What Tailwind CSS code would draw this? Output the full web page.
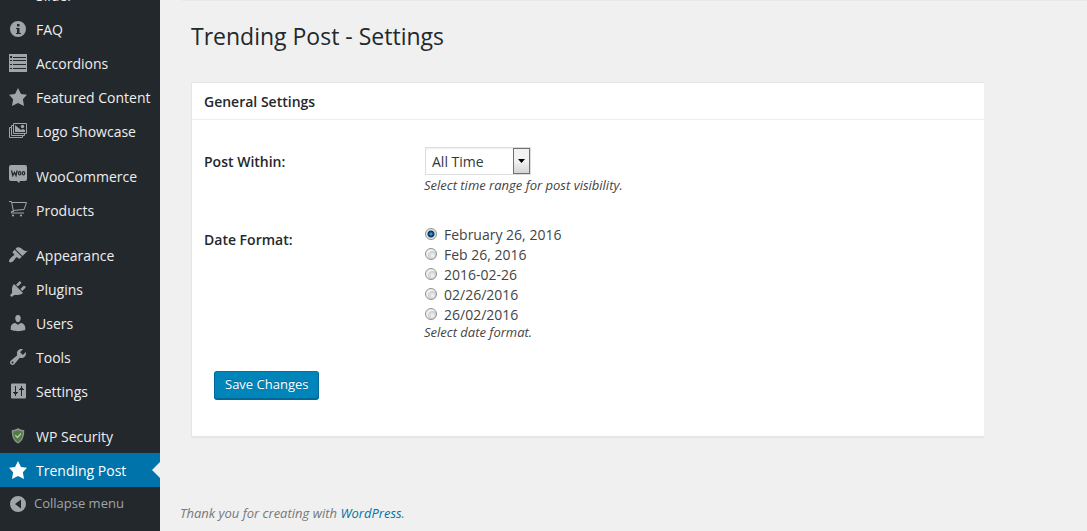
<!DOCTYPE html>
<html lang="en">
<head>
<meta charset="utf-8">
<meta name="viewport" content="width=device-width, initial-scale=1">
<title>Trending Post - Settings</title>
<script src="https://cdn.jsdelivr.net/npm/@tailwindcss/browser@4"></script>
</head>
<body class="flex h-screen overflow-hidden bg-[#f0f0f0] font-['Open_Sans',sans-serif] text-[14px] text-[#444]">

<nav aria-label="Admin menu" class="w-40 shrink-0 overflow-hidden bg-[#23282d] text-[#eee]">
  <ul class="-mt-[22px]">
    <li><a href="#" class="flex h-[34px] items-center gap-2 pl-2 whitespace-nowrap"><span class="size-5"></span>Slider</a></li>
    <li><a href="#" class="flex h-[34px] items-center gap-2 pl-2 whitespace-nowrap">
      <svg class="size-5 shrink-0 text-[#a0a5aa]" viewBox="0 0 20 20" fill="currentColor" fill-rule="evenodd"><path d="M10 2a8 8 0 1 0 0 16 8 8 0 0 0 0-16zM9 5h2.500v2.500H9zM8 9h3.500v5H13v1H8v-1h1v-4H8z"/></svg>FAQ</a></li>
    <li><a href="#" class="flex h-[34px] items-center gap-2 pl-2 whitespace-nowrap">
      <svg class="size-5 shrink-0 text-[#a0a5aa]" viewBox="0 0 20 20" fill="currentColor" fill-rule="evenodd"><path d="M1 1h18v18H1zM2 3v2h2V3zM5 4v1h13V4zM2 7v1h2V7zM5 7v1h13V7zM2 11v1h2v-1zM5 11v1h13v-1zM2 15v1h2v-1zM5 15v1h13v-1z"/></svg>Accordions</a></li>
    <li><a href="#" class="flex h-[34px] items-center gap-2 pl-2 whitespace-nowrap">
      <svg class="size-5 shrink-0 text-[#a0a5aa]" viewBox="0 0 20 20" fill="currentColor"><path d="M10 1l3 6 6 .75-4.120 4.620L16 19l-6-3-6 3 1.130-6.630L1 7.750 7 7z"/></svg>Featured Content</a></li>
    <li><a href="#" class="flex h-[34px] items-center gap-2 pl-2 whitespace-nowrap">
      <svg class="size-5 shrink-0 text-[#a0a5aa]" viewBox="0 0 20 20" fill="none" stroke="currentColor"><path d="M5.500 2.500h13v10h-13zM5 4.500H3.500v10h13V13M3 6.500H1.500v10h13V15"/><path fill="currentColor" stroke="none" d="M7 4l6 5 2-1 2 1v2H7z"/><circle cx="14.500" cy="5.500" r="1.700" fill="currentColor" stroke="none"/></svg>Logo Showcase</a></li>
    <li class="mt-[11px]"><a href="#" class="flex h-[34px] items-center gap-2 pl-2 whitespace-nowrap">
      <svg class="size-5 shrink-0 overflow-visible text-[#a0a5aa]" viewBox="0 0 20 20" fill="currentColor"><path d="M3 -1h14a2 2 0 0 1 2 2v12a2 2 0 0 1-2 2h-5l-1 2-2-2H3a2 2 0 0 1-2-2V1a2 2 0 0 1 2-2z"/><path d="M3.500 4.500l1.300 5 1.700-3 1.500 3 1.200-5" fill="none" stroke="#23282d" stroke-width="1.300"/><ellipse cx="11.700" cy="7.300" rx="1.200" ry="1.700" fill="none" stroke="#23282d" stroke-width="1.200"/><ellipse cx="15.500" cy="7.300" rx="1.200" ry="1.700" fill="none" stroke="#23282d" stroke-width="1.200"/></svg>WooCommerce</a></li>
    <li><a href="#" class="flex h-[34px] items-center gap-2 pl-2 whitespace-nowrap">
      <svg class="size-5 shrink-0 text-[#a0a5aa]" viewBox="0 0 20 20" fill="none" stroke="currentColor"><path d="M1 1.500h2.500L5.500 12M4 2.500h14.500L16 9.500 5 10.500M5 11.500H3.500v1.500H16"/><circle cx="5" cy="15.500" r="1.100" fill="currentColor" stroke="none"/><circle cx="13" cy="15.500" r="1.100" fill="currentColor" stroke="none"/></svg>Products</a></li>
    <li class="mt-[11px]"><a href="#" class="flex h-[34px] items-center gap-2 pl-2 whitespace-nowrap">
      <svg class="size-5 shrink-0 text-[#a0a5aa]" viewBox="0 0 20 20" fill="currentColor"><path d="M14.480 11.060L7.410 3.990l1.500-1.500c.5-.56 2.300-.47 3.510.32 1.210.8 1.430 1.280 2.910 2.100 1.180.64 2.450 1.260 4.450.85zm-.71.710L6.700 4.700 4.930 6.470c-.39.390-.39 1.020 0 1.410l1.060 1.060c.39.390.39 1.030 0 1.420-.6.600-1.430 1.110-2.210 1.690-.35.260-.7.530-1.010.840C1.430 14.230.4 16.080 1.400 17.070c.99 1 2.840-.03 4.180-1.360.31-.31.580-.66.850-1.020.57-.78 1.080-1.610 1.690-2.210.39-.39 1.020-.39 1.410 0l1.060 1.060c.39.390 1.020.39 1.410 0z"/></svg>Appearance</a></li>
    <li><a href="#" class="flex h-[34px] items-center gap-2 pl-2 whitespace-nowrap">
      <svg class="size-5 shrink-0 text-[#a0a5aa]" viewBox="0 0 20 20" fill="currentColor"><path d="M13.110 4.360L9.870 7.600 8 5.730l3.240-3.240c.35-.34 1.050-.2 1.560.32.520.51.660 1.210.310 1.550zm-8 1.770l.91-1.120 9.010 9.010-1.190.84c-.71.710-2.630 1.160-3.820 1.160H6.140L4.900 17.260c-.59.590-1.540.590-2.120 0-.59-.58-.59-1.530 0-2.120l1.240-1.240v-3.880c0-1.130.4-3.190 1.090-3.890zm7.260 3.970l3.240-3.240c.34-.35 1.040-.21 1.550.310.520.510.660 1.210.310 1.550l-3.240 3.250z"/></svg>Plugins</a></li>
    <li><a href="#" class="flex h-[34px] items-center gap-2 pl-2 whitespace-nowrap">
      <svg class="size-5 shrink-0 text-[#a0a5aa]" viewBox="0 0 20 20" fill="currentColor"><path d="M10 9.250c-2.270 0-2.730-3.440-2.730-3.440C7 4.020 7.820 2 9.970 2c2.160 0 2.980 2.020 2.710 3.810 0 0-.41 3.440-2.680 3.440zm0 2.570L12.720 10c2.390 0 4.520 2.330 4.520 4.530v2.490s-3.650 1.130-7.240 1.130c-3.650 0-7.240-1.130-7.240-1.130v-2.490c0-2.250 1.940-4.480 4.470-4.480z"/></svg>Users</a></li>
    <li><a href="#" class="flex h-[34px] items-center gap-2 pl-2 whitespace-nowrap">
      <svg class="size-5 shrink-0 text-[#a0a5aa]" viewBox="0 0 20 20" fill="currentColor"><path d="M16.680 9.770c-1.340 1.340-3.300 1.670-4.950.990l-5.410 6.520c-.99.990-2.590.99-3.580 0s-.99-2.590 0-3.570l6.520-5.420c-.68-1.650-.35-3.610.99-4.950 1.280-1.280 3.120-1.620 4.720-1.060l-2.890 2.890 2.820 2.820 2.860-2.870c.53 1.580.18 3.390-1.080 4.650zM3.810 16.210c.4.390 1.040.39 1.430 0 .4-.4.400-1.040 0-1.430-.39-.4-1.030-.4-1.430 0-.39.390-.39 1.030 0 1.430z"/></svg>Tools</a></li>
    <li><a href="#" class="flex h-[34px] items-center gap-2 pl-2 whitespace-nowrap">
      <svg class="size-5 shrink-0 text-[#a0a5aa]" viewBox="0 0 20 20" fill="currentColor" fill-rule="evenodd"><path d="M18 16V4c0-1.100-.4-1.500-1.500-1.500h-12C3.400 2.500 3 2.900 3 4v12c0 1.100.4 1.500 1.500 1.500h12c1.100 0 1.500-.4 1.500-1.500zM8 11h2v1H9v1H8v2H7v-2H6v-1H5v-1h2V5h1zm5-2h-2V8h1V7h1V5h1v2h1v1h1v1h-2v6h-1z"/></svg>Settings</a></li>
    <li class="mt-[11px]"><a href="#" class="flex h-[34px] items-center gap-2 pl-2 whitespace-nowrap">
      <svg class="size-5 shrink-0" viewBox="0 0 20 20"><path d="M10 2c2 1.500 4 2 6.200 2 .2 6-1.200 11-6.200 13.500C5 15 3.600 10 3.800 4 6 4 8 3.500 10 2z" fill="#8b9290"/><path d="M10 4c1.500 1 3 1.400 4.700 1.400 0 4.600-1 8.400-4.700 10.500-3.700-2.100-4.700-5.900-4.700-10.500C7 5.400 8.500 5 10 4z" fill="#4f7d40"/><path d="M7.300 9.200l2.200 2.300 3.500-4" fill="none" stroke="#b9cbb2" stroke-width="1.200"/></svg>WP Security</a></li>
    <li><a href="#" aria-current="page" class="relative flex h-[34px] items-center gap-2 bg-[#0073aa] pl-2 whitespace-nowrap text-white">
      <svg class="size-5 shrink-0" viewBox="0 0 20 20" fill="currentColor"><path d="M10 1l3 6 6 .75-4.120 4.620L16 19l-6-3-6 3 1.130-6.630L1 7.750 7 7z"/></svg>Trending Post
      <span class="absolute top-[9px] right-0 border-y-8 border-r-8 border-y-transparent border-r-[#f0f0f0]"></span></a></li>
    <li><button type="button" class="flex h-[34px] items-center gap-1.5 pl-2 text-[13px] whitespace-nowrap text-[#a0a5aa]">
      <svg class="size-5 shrink-0" viewBox="0 0 20 20" fill="currentColor" fill-rule="evenodd"><path d="M10 2a8 8 0 1 0 0 16 8 8 0 0 0 0-16zM13 5.500v9L7 10z"/></svg>Collapse menu</button></li>
  </ul>
</nav>

<div class="flex min-w-0 flex-1 flex-col pl-5">
  <div class="ml-0.5 h-px shrink-0 bg-[#e8e8e8]"></div>
  <main class="mr-[103px] ml-[11px]">
    <h1 class="pt-[19px] text-[23px] leading-8 text-[#23282d]">Trending Post - Settings</h1>

    <section class="mt-[30px] border-y border-l border-[#e5e5e5] bg-white shadow-[0_1px_1px_rgba(0,0,0,0.04)]">
      <h2 class="border-b border-[#eee] px-3 pt-[9px] pb-[7px] text-[14px] leading-5 font-semibold text-[#23282d]">General Settings</h2>
      <form class="px-3 pt-[27px] pb-[37px]">
        <div class="flex">
          <label for="range" class="w-[220px] shrink-0 pt-[5px] leading-5 font-semibold text-[#23282d]">Post Within:</label>
          <div>
            <div class="relative ml-px h-7 w-[106px]">
              <select id="range" class="h-full w-full appearance-none border border-[#ddd] bg-white pl-1.5 text-[14px] text-[#32373c] shadow-[inset_0_1px_2px_rgba(0,0,0,0.07)]"><option>All Time</option></select>
              <span class="pointer-events-none absolute inset-y-px right-px flex w-[17px] items-center justify-center border border-[#707070] bg-linear-to-b from-[#f2f2f2] from-50% to-[#d4d4d4] to-100%">
                <svg class="h-1 w-[7px]" viewBox="0 0 7 4"><path d="M0 0h7L3.500 4z"/></svg>
              </span>
            </div>
            <p class="text-[13px] leading-5 text-[#444] italic">Select time range for post visibility.</p>
          </div>
        </div>

        <div class="mt-[29px] flex">
          <div id="df" class="w-[220px] shrink-0 pt-1.5 leading-5 font-semibold text-[#23282d]">Date Format:</div>
          <div role="radiogroup" aria-labelledby="df">
            <label class="flex h-5 items-center gap-[7px] pl-px"><input type="radio" name="date" checked class="size-3 appearance-none rounded-full border border-[#8e8f8f] bg-[radial-gradient(circle,#5cb8e6_0,#0b4d7d_2px,#0a3354_3px,#e4e8ea_4px)]">February 26, 2016</label>
            <label class="flex h-5 items-center gap-[7px] pl-px"><input type="radio" name="date" class="size-3 appearance-none rounded-full border border-[#8e8f8f] bg-[radial-gradient(circle_at_65%_65%,#f4f4f4_0,#cdd0d2_4px,#f0f0f0_5px)]">Feb 26, 2016</label>
            <label class="flex h-5 items-center gap-[7px] pl-px"><input type="radio" name="date" class="size-3 appearance-none rounded-full border border-[#8e8f8f] bg-[radial-gradient(circle_at_65%_65%,#f4f4f4_0,#cdd0d2_4px,#f0f0f0_5px)]">2016-02-26</label>
            <label class="flex h-5 items-center gap-[7px] pl-px"><input type="radio" name="date" class="size-3 appearance-none rounded-full border border-[#8e8f8f] bg-[radial-gradient(circle_at_65%_65%,#f4f4f4_0,#cdd0d2_4px,#f0f0f0_5px)]">02/26/2016</label>
            <label class="flex h-5 items-center gap-[7px] pl-px"><input type="radio" name="date" class="size-3 appearance-none rounded-full border border-[#8e8f8f] bg-[radial-gradient(circle_at_65%_65%,#f4f4f4_0,#cdd0d2_4px,#f0f0f0_5px)]">26/02/2016</label>
            <p class="text-[13px] leading-4 text-[#444] italic">Select date format.</p>
          </div>
        </div>

        <button type="submit" class="mt-[31px] ml-2.5 block h-7 rounded-[3px] border border-[#006799] border-t-[#0073aa] bg-[#0085ba] px-2.5 text-[13px] text-white shadow-[0_1px_0_#006799] [text-shadow:0_-1px_1px_#006799]">Save Changes</button>
      </form>
    </section>
  </main>
  <footer class="mt-auto pb-2 text-[13px] leading-5 text-[#777] italic">Thank you for creating with <a href="#" class="text-[#0073aa]">WordPress</a>.</footer>
</div>
</body>
</html>
